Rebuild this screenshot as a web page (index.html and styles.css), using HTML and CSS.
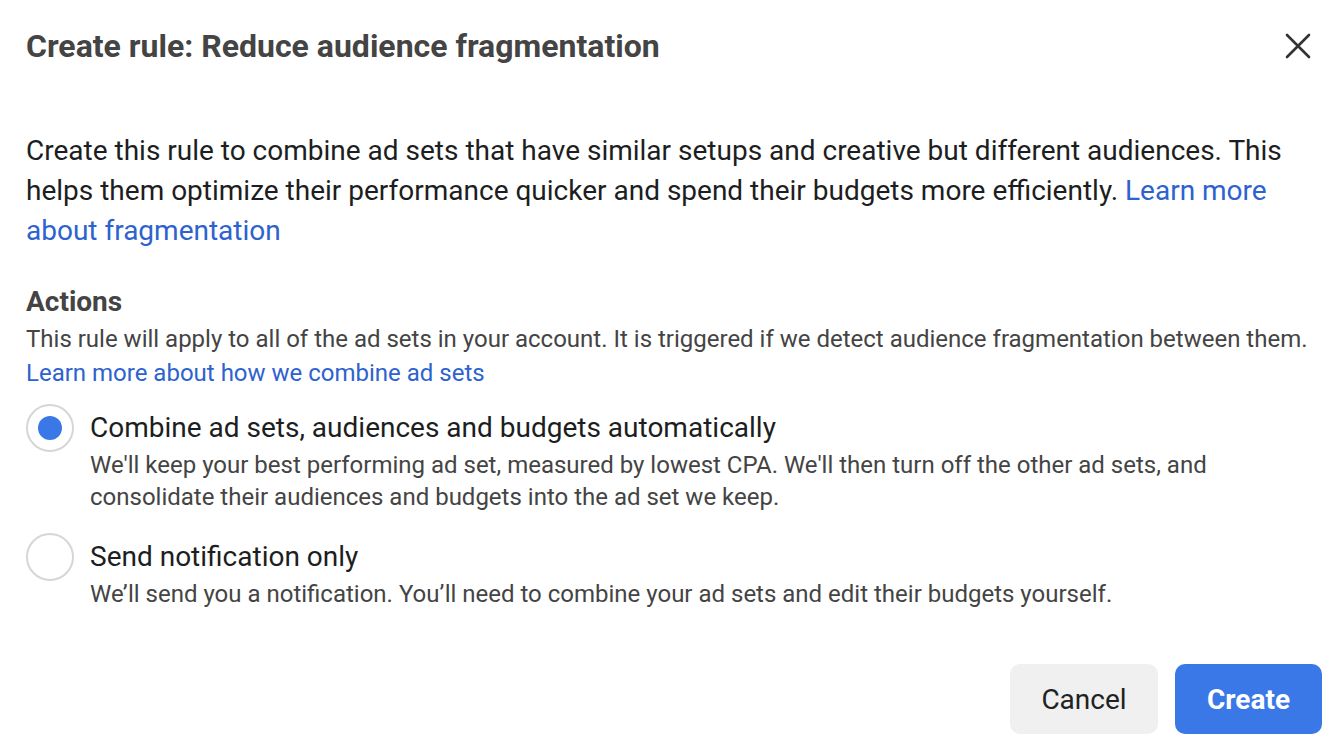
FILE: index.html
```html
<!DOCTYPE html>
<html lang="en">
<head>
<meta charset="utf-8">
<title>Create rule</title>
<link rel="stylesheet" href="styles.css">
</head>
<body>
<div class="dialog">
  <header class="header">
    <h1 class="title">Create rule: Reduce audience fragmentation</h1>
    <button class="close" aria-label="Close">
      <svg width="26" height="26" viewBox="0 0 26 26"><path d="M2 2L24 24M24 2L2 24" stroke="#333" stroke-width="2.6" stroke-linecap="round"/></svg>
    </button>
  </header>
  <p class="intro">Create this rule to combine ad sets that have similar setups and creative but different audiences. This helps them optimize their performance quicker and spend their budgets more efficiently. <a href="#" class="link">Learn more about fragmentation</a></p>
  <section class="actions">
    <h2 class="section-title">Actions</h2>
    <p class="section-desc">This rule will apply to all of the ad sets in your account. It is triggered if we detect audience fragmentation between them.<br><a href="#" class="link">Learn more about how we combine ad sets</a></p>
    <div class="options">
      <label class="option">
        <span class="radio checked"><span class="dot"></span></span>
        <span class="option-text">
          <span class="option-title">Combine ad sets, audiences and budgets automatically</span>
          <span class="option-desc">We'll keep your best performing ad set, measured by lowest CPA. We'll then turn off the other ad sets, and consolidate their audiences and budgets into the ad set we keep.</span>
        </span>
      </label>
      <label class="option">
        <span class="radio"></span>
        <span class="option-text">
          <span class="option-title">Send notification only</span>
          <span class="option-desc">We’ll send you a notification. You’ll need to combine your ad sets and edit their budgets yourself.</span>
        </span>
      </label>
    </div>
  </section>
  <footer class="footer">
    <button class="btn btn-cancel">Cancel</button>
    <button class="btn btn-create">Create</button>
  </footer>
</div>
</body>
</html>
```
FILE: styles.css
```css
* { box-sizing: border-box; }
html, body { margin: 0; padding: 0; background: #fff; }
body { font-family: Roboto, "Noto Sans", sans-serif; color: #1c1e21; }
.dialog { width: 1344px; height: 748px; padding: 0 22px 0 26px; display: flex; flex-direction: column; }
.header { display: flex; align-items: center; justify-content: space-between; height: 92px; }
.title { margin: 0; font-size: 32px; font-weight: 700; color: #444; letter-spacing: 0; }
.close { background: none; border: 0; padding: 0; width: 26px; height: 26px; margin-right: 11px; display: flex; }
.intro { margin: 39px 0 0; font-size: 28px; line-height: 40px; color: #1c1e21; }
.link { color: #2d62cf; text-decoration: none; }
.actions { margin-top: 31px; }
.section-title { margin: 0; font-size: 28px; line-height: 40px; font-weight: 700; color: #444; }
.section-desc { margin: 0; font-size: 24px; line-height: 34px; color: #444; }
.options { margin-top: 14px; display: flex; flex-direction: column; gap: 20px; }
.option { display: flex; gap: 16px; }
.radio { flex: none; width: 48px; height: 48px; border-radius: 50%; border: 2px solid #d6d6d6; display: flex; align-items: center; justify-content: center; }
.dot { width: 24px; height: 24px; border-radius: 50%; background: #3b78e7; }
.option-text { display: flex; flex-direction: column; }
.option-title { font-size: 28px; line-height: 48px; color: #1c1e21; }
.option-desc { font-size: 24px; line-height: 32px; color: #444; margin-top: -3px; }
.footer { margin-top: auto; margin-bottom: 14px; display: flex; justify-content: flex-end; gap: 17px; }
.btn { height: 70px; border: 0; border-radius: 10px; font-family: inherit; font-size: 28px; padding: 0; }
.btn-cancel { width: 148px; background: #f0f0f0; color: #222; }
.btn-create { width: 147px; background: #3b78e7; color: #fff; font-weight: 700; }
```
